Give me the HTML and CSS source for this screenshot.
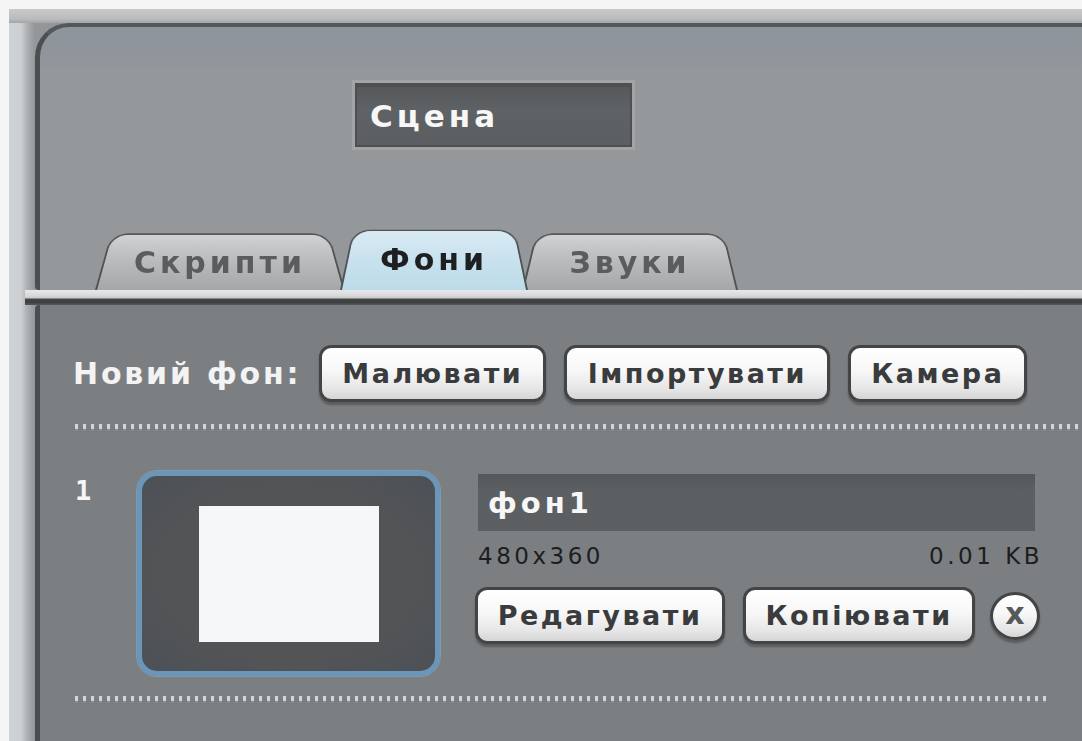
FILE: index.html
```html
<!DOCTYPE html>
<html lang="uk">
<head>
<meta charset="utf-8">
<title>Сцена — Фони</title>
<link rel="stylesheet" href="styles.css">
</head>
<body>
<div class="screen">
  <div class="frame">
    <section class="head">
      <div class="name-field">Сцена</div>
      <nav class="tabs">
        <div class="tab tab-first">Скрипти</div>
        <div class="tab tab-active">Фони</div>
        <div class="tab tab-last">Звуки</div>
      </nav>
    </section>
    <div class="bar"></div>
    <section class="pane">
      <div class="new-row">
        <span class="new-label">Новий фон:</span>
        <button class="btn btn-paint">Малювати</button>
        <button class="btn btn-import">Імпортувати</button>
        <button class="btn btn-camera">Камера</button>
      </div>
      <div class="dots dots-wide"></div>
      <div class="item">
        <span class="item-index">1</span>
        <div class="thumb"><div class="thumb-canvas"></div></div>
        <div class="info">
          <div class="item-name">фон1</div>
          <div class="meta"><span>480x360</span><span>0.01 KB</span></div>
          <div class="actions">
            <button class="btn btn-edit">Редагувати</button>
            <button class="btn btn-copy">Копіювати</button>
            <button class="btn btn-delete">x</button>
          </div>
        </div>
      </div>
      <div class="dots dots-item"></div>
    </section>
  </div>
</div>
</body>
</html>
```

FILE: styles.css
```css
* { box-sizing: border-box; }

html, body {
  margin: 0;
  height: 100%;
}

body {
  background: #f5f5f5;
  font-family: "DejaVu Sans", Verdana, sans-serif;
  overflow: hidden;
}

.screen {
  width: 1082px;
  height: 741px;
  padding: 9px 0 0 9px;
  overflow: hidden;
}

/* light outer chrome around the editor panel */
.frame {
  height: 100%;
  width: 1100px;
  padding: 14px 0 0 26px;
  display: flex;
  flex-direction: column;
  background:
    linear-gradient(to bottom, #c9cacb 0, #b9bbbd 10px, #a3a5a7 14px, transparent 14px),
    linear-gradient(to right, #d0d3d6 0, #cdd0d3 12px, #aeb1b4 18px, #94979a 26px);
}

/* upper part: sprite name and tabs */
.head {
  height: 267px;
  border-top: 4px solid #55585b;
  border-left: 5px solid #4c4f52;
  border-top-left-radius: 34px;
  border-bottom-left-radius: 4px;
  background: linear-gradient(to bottom, #8f959c 0, #8f959b 24px, #95989b 48px, #95989b 100%);
  display: flex;
  flex-direction: column;
}

.name-field {
  margin: 56px 0 0 315px;
  width: 277px;
  height: 64px;
  padding: 0 0 0 13px;
  display: flex;
  align-items: center;
  color: #f7f7f7;
  font-weight: bold;
  font-size: 31px;
  letter-spacing: 4px;
  background: linear-gradient(to bottom, #56595c, #5f6265 40%, #5c5f62);
  border: 2px solid #4d5053;
  border-top-width: 4px;
  box-shadow: 0 0 0 3px #a2a4a6;
}

.tabs {
  margin-top: auto;
  padding-left: 55px;
  display: flex;
  align-items: flex-end;
}

.tab {
  position: relative;
  z-index: 1;
  height: 58px;
  padding-top: 2px;
  display: flex;
  align-items: center;
  justify-content: center;
  font-weight: bold;
  font-size: 30px;
  letter-spacing: 4px;
  color: #5a5c5f;
}

.tab::before {
  content: "";
  position: absolute;
  left: 0;
  right: 0;
  bottom: 0;
  top: -9px;
  z-index: -1;
  border: 2px solid #505356;
  border-bottom: none;
  border-radius: 20px 20px 0 0;
  background: linear-gradient(to bottom, #d0d2d4, #b7b9bb 55%, #a5a7a9);
  transform: perspective(110px) rotateX(14deg);
  transform-origin: bottom;
}

.tab-first { width: 250px; }

.tab-active {
  z-index: 3;
  width: 188px;
  height: 63px;
  margin-left: -5px;
  color: #1d1f21;
}

.tab-active::before {
  background: linear-gradient(to bottom, #d8ebf4, #c8e1ee 55%, #bcdbe9);
}

.tab-last {
  z-index: 2;
  width: 216px;
  margin-left: -6px;
}

/* strip under the tabs */
.bar {
  position: relative;
  z-index: 2;
  margin-left: -10px;
  height: 15px;
  background: linear-gradient(to bottom, #e6e8ea 0, #d6d8da 6px, #c7c9cb 8px, #46484a 9px, #3b3d3f 12px, #56595b 15px);
}

/* lower part: backdrop list */
.pane {
  flex: 1;
  border-left: 5px solid #4a4d50;
  border-top-left-radius: 4px;
  background: #7c7f82;
  padding: 40px 0 0 30px;
}

.new-row {
  display: flex;
  align-items: center;
  gap: 18px;
}

.new-label {
  color: #f3f3f3;
  font-weight: bold;
  font-size: 30px;
  letter-spacing: 2.8px;
  margin-left: 3px;
}

.btn {
  height: 57px;
  padding: 0 10px;
  font-family: "DejaVu Sans", Verdana, sans-serif;
  font-weight: bold;
  font-size: 27px;
  letter-spacing: 2.5px;
  color: #3a3b3c;
  background: linear-gradient(to bottom, #ffffff 0, #f7f7f7 45%, #e6e6e6 80%, #d5d5d5 100%);
  border: 3px solid #424446;
  border-radius: 12px;
  box-shadow: 0 3px 2px rgba(30, 30, 30, 0.35);
}

.btn-paint { width: 227px; }
.btn-import { width: 266px; }
.btn-camera { width: 179px; }

.dots {
  height: 7px;
  background:
    repeating-linear-gradient(to right, #d4d6d8 0 3px, transparent 3px 8px) top / 100% 5px no-repeat,
    repeating-linear-gradient(to right, #868a8d 0 3px, transparent 3px 8px) bottom / 100% 2px no-repeat;
}

.dots-wide {
  margin: 22px 0 0 5px;
}

.item {
  margin: 40px 0 0 5px;
  display: flex;
  align-items: flex-start;
}

.item-index {
  width: 62px;
  padding-top: 6px;
  color: #f6f6f6;
  font-family: "DejaVu Sans Mono", monospace;
  font-weight: bold;
  font-size: 27px;
  line-height: 1;
}

.thumb {
  width: 303px;
  height: 205px;
  border: 5px solid #6b96b9;
  border-radius: 20px;
  background: radial-gradient(ellipse at center, #535456 60%, #4c5157 100%);
  box-shadow: 0 0 0 1px #7f98ad;
  display: flex;
  align-items: center;
  justify-content: center;
}

.thumb-canvas {
  width: 180px;
  height: 136px;
  background: #f6f7f8;
}

.info {
  margin: 3px 0 0 38px;
  width: 562px;
}

.item-name {
  width: 557px;
  height: 57px;
  padding: 0 0 0 10px;
  display: flex;
  align-items: center;
  color: #f7f7f7;
  font-weight: bold;
  font-size: 29px;
  letter-spacing: 4px;
  background: linear-gradient(to bottom, #54575a, #5d6063 30%, #5c5f62);
}

.meta {
  margin-top: 11px;
  display: flex;
  justify-content: space-between;
  color: #1c1d1e;
  font-size: 23px;
  letter-spacing: 3.5px;
  line-height: 28px;
}

.meta span:last-child {
  margin-right: -3px;
}

.actions {
  margin: 17px 0 0 -3px;
  display: flex;
  align-items: center;
  gap: 18px;
}

.btn-edit { width: 250px; }
.btn-copy { width: 232px; }

.btn-delete {
  width: 50px;
  height: 48px;
  padding: 0 0 4px;
  margin-left: -3px;
  border-radius: 50%;
  font-size: 30px;
  color: #56585a;
  letter-spacing: 0;
}

.dots-item {
  margin: 20px 0 0 5px;
  width: 975px;
}
```
